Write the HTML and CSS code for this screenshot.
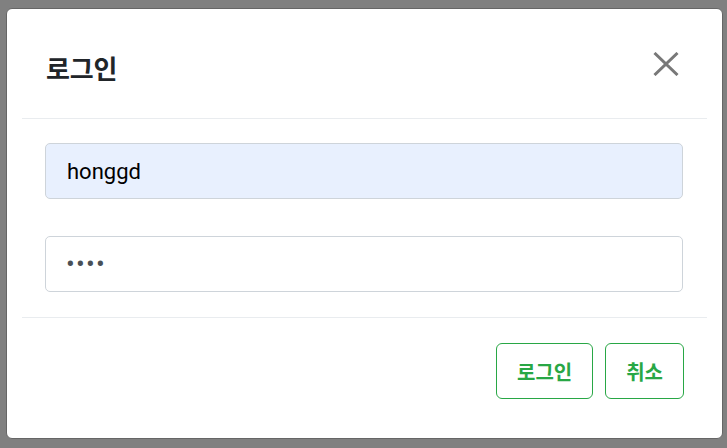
FILE: index.html
```html
<!DOCTYPE html>
<html lang="ko">
<head>
<meta charset="utf-8">
<title>로그인</title>
<link rel="stylesheet" href="styles.css">
</head>
<body>
<div class="backdrop">
  <div class="modal">
    <div class="inner">
      <div class="modal-header">
        <h5 class="modal-title">로그인</h5>
        <button class="close" type="button" aria-label="Close">
          <svg width="26" height="24" viewBox="0 0 26 24"><path d="M1.5 1 L24.5 23 M24.5 1 L1.5 23" stroke="#787878" stroke-width="3" fill="none"/></svg>
        </button>
      </div>
      <div class="modal-body">
        <input class="form-control autofill" type="text" value="honggd">
        <input class="form-control pw" type="password" value="1234">
      </div>
      <div class="modal-footer">
        <button class="btn" type="button">로그인</button>
        <button class="btn" type="button">취소</button>
      </div>
    </div>
  </div>
</div>
</body>
</html>
```

FILE: styles.css
```css
html, body {
  margin: 0;
  padding: 0;
  height: 100%;
}
body {
  background: #808080;
  font-family: Roboto, "Noto Sans CJK KR", sans-serif;
}
.backdrop {
  box-sizing: border-box;
  height: 100%;
  padding: 8px 4px 9px 6px;
  display: flex;
}
.modal {
  flex: 1;
  background: #fff;
  border: 1px solid #666;
  border-radius: 6px;
  box-sizing: border-box;
}
.inner {
  padding: 0 15px;
}
.modal-header {
  height: 110px;
  box-sizing: border-box;
  border-bottom: 1px solid #e9ecef;
  display: flex;
  align-items: center;
  justify-content: space-between;
  padding: 0 28px 0 24px;
}
.modal-title {
  margin: 0;
  padding-top: 8px;
  font-family: "Noto Sans CJK KR", sans-serif;
  font-weight: 700;
  font-size: 26px;
  color: #212529;
  letter-spacing: -0.2px;
}
.close {
  border: 0;
  background: none;
  padding: 0;
  margin-top: 1px;
  display: flex;
}
.modal-body {
  padding: 24px 24px 25px 23px;
  display: flex;
  flex-direction: column;
  gap: 37px;
  border-bottom: 1px solid #e9ecef;
}
.form-control {
  box-sizing: border-box;
  height: 56px;
  width: 100%;
  margin: 0;
  border: 1px solid #ced4da;
  border-radius: 5px;
  padding: 0 21px;
  font-family: Roboto, sans-serif;
  font-size: 22px;
  color: #495057;
  background: #fff;
  outline: none;
}
.autofill {
  background: #e8f0fe;
  color: #000;
}
.pw {
  font-size: 26px;
  letter-spacing: 1.2px;
  padding-left: 20px;
}
.modal-footer {
  display: flex;
  justify-content: flex-end;
  gap: 12px;
  padding: 25px 23px 38px;
}
.btn {
  height: 56px;
  padding: 0 20px;
  border: 1px solid #28a745;
  border-radius: 6px;
  background: #fff;
  color: #28a745;
  font-family: "Noto Sans CJK KR", sans-serif;
  font-weight: 700;
  font-size: 20px;
}
```
